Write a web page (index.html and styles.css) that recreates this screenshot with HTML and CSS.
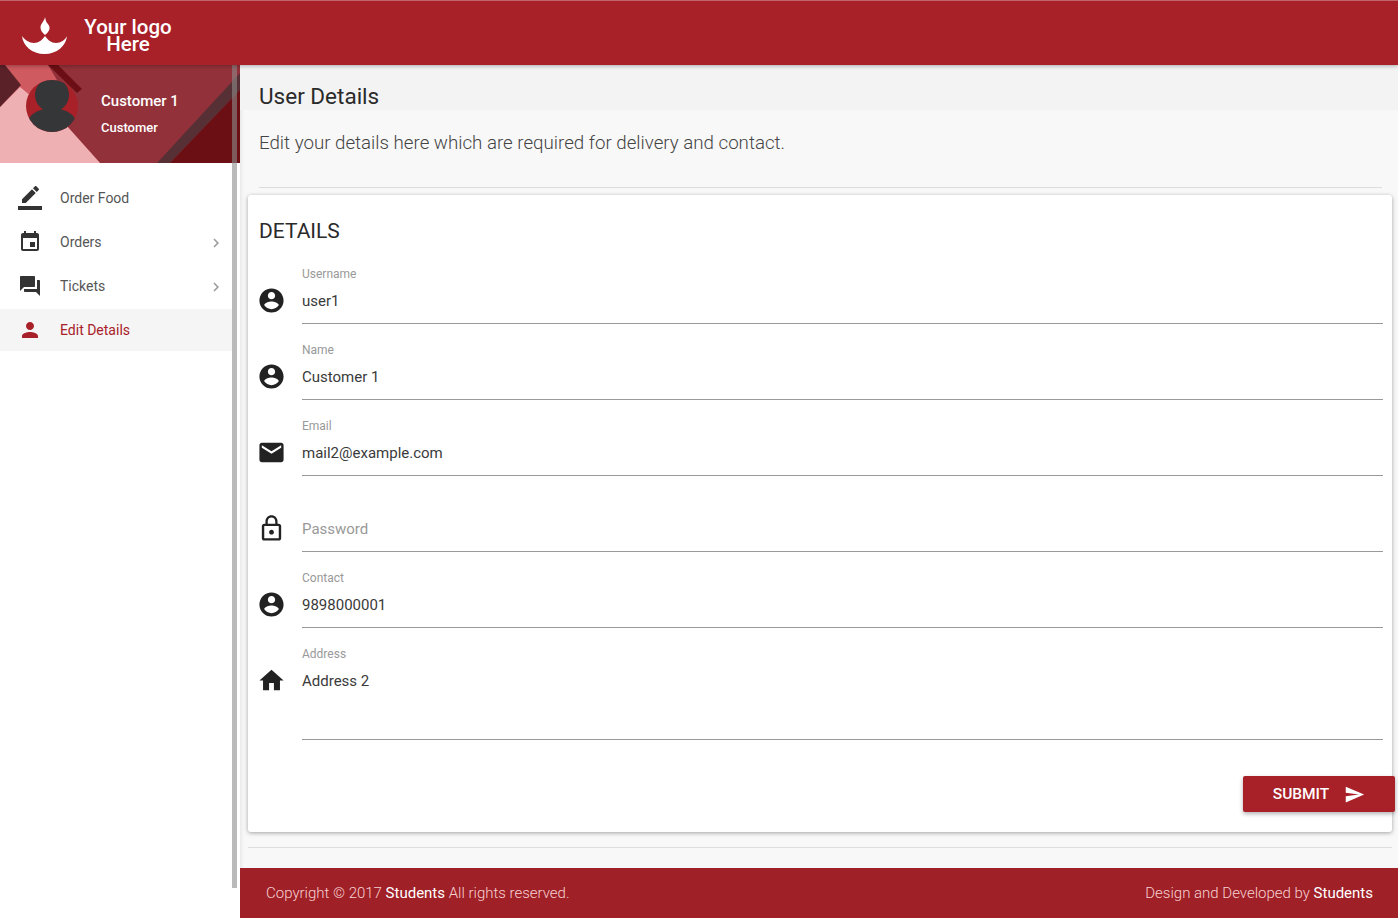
FILE: index.html
```html
<!DOCTYPE html>
<html lang="en">
<head>
    <meta charset="UTF-8">
    <meta name="viewport" content="width=device-width, initial-scale=1.0">
    <title>User Details</title>
    <link rel="stylesheet" href="styles.css">
</head>
<body>
    <header class="topbar">
        <svg class="logo-mark" viewBox="0 0 46 38">
            <path d="M23 1c-.5 4-4 6-4.500 10-.3 3 2 6 4.500 8 2.500-2 5-4.500 4.500-8-.5-3-3-3.500-3.500-6-.3-1.500-.8-2.500-1-4z"/>
            <path d="M0 20c3 4 7 7 12 7 5 0 8-3 11-7 3 4 6 7 11 7 5 0 9-3 11-7-1 10-10 18-22.500 18S1 30 0 20z"/>
        </svg>
        <div class="logo-text">Your logo<br>Here</div>
    </header>

    <div class="layout">
        <aside class="sidebar">
            <div class="profile">
                <svg class="profile-bg" viewBox="0 0 240 98">
                    <rect width="240" height="98" fill="#cf5a60"/>
                    <polygon points="48,0 240,0 240,98 100,98 66,60 72,40" fill="#93313a"/>
                    <polygon points="0,42 20,22 66,60 100,98 0,98" fill="#eeb0b3"/>
                    <polygon points="0,0 5,0 21,20 0,42" fill="#5a2228"/>
                    <polygon points="48,0 58,0 82,24 77,28" fill="#6b0f14"/>
                    <polygon points="157,98 240,8 240,25 170,98" fill="#573036"/>
                    <polygon points="170,98 240,25 240,98" fill="#6b0f14"/>
                </svg>
                <svg class="avatar" viewBox="0 0 52 52">
                    <clipPath id="avatar-clip"><circle cx="26" cy="26" r="26"/></clipPath>
                    <g clip-path="url(#avatar-clip)">
                        <rect width="52" height="52" fill="#a82028"/>
                        <circle cx="26" cy="15" r="17" fill="#343638"/>
                        <ellipse cx="26" cy="47" rx="26" ry="19" fill="#343638"/>
                    </g>
                </svg>
                <div class="profile-text">
                    <div class="profile-name">Customer 1</div>
                    <div class="profile-role">Customer</div>
                </div>
            </div>
            <nav class="menu">
                <a class="menu-item">
                    <svg class="menu-icon" viewBox="0 0 24 24"><path d="M17.750 7L14 3.250l-10 10V17h3.750l10-10zm2.960-2.960c.39-.39.39-1.020 0-1.410L18.370.29a.996.996 0 0 0-1.410 0L15 2.250 18.750 6l1.960-1.960z"/><path d="M0 20h24v4H0z"/></svg>
                    <span>Order Food</span>
                </a>
                <a class="menu-item">
                    <svg class="menu-icon" viewBox="0 0 24 24"><path d="M17 12h-5v5h5v-5zM16 1v2H8V1H6v2H5c-1.110 0-1.990.9-1.990 2L3 19c0 1.100.89 2 2 2h14c1.100 0 2-.9 2-2V5c0-1.100-.9-2-2-2h-1V1h-2zm3 18H5V8h14v11z"/></svg>
                    <span>Orders</span>
                    <svg class="chevron" viewBox="0 0 24 24"><path d="M10 6L8.590 7.410 13.170 12l-4.580 4.590L10 18l6-6z"/></svg>
                </a>
                <a class="menu-item">
                    <svg class="menu-icon" viewBox="0 0 24 24"><path d="M21 6h-2v9H6v2c0 .55.45 1 1 1h11l4 4V7c0-.55-.45-1-1-1zm-4 6V3c0-.55-.45-1-1-1H3c-.55 0-1 .45-1 1v14l4-4h10c.55 0 1-.45 1-1z"/></svg>
                    <span>Tickets</span>
                    <svg class="chevron" viewBox="0 0 24 24"><path d="M10 6L8.590 7.410 13.170 12l-4.580 4.590L10 18l6-6z"/></svg>
                </a>
                <a class="menu-item active">
                    <svg class="menu-icon" viewBox="0 0 24 24"><path d="M12 12c2.210 0 4-1.790 4-4s-1.790-4-4-4-4 1.790-4 4 1.790 4 4 4zm0 2c-2.670 0-8 1.340-8 4v2h16v-2c0-2.660-5.330-4-8-4z"/></svg>
                    <span>Edit Details</span>
                </a>
            </nav>
            <div class="scrollbar"></div>
        </aside>

        <main class="content">
            <h1 class="page-title">User Details</h1>
            <div class="page-sub">
                <p>Edit your details here which are required for delivery and contact.</p>
            </div>
            <div class="card-wrap">
                <section class="card">
                    <h2 class="card-title">DETAILS</h2>

                    <div class="field">
                        <svg class="field-icon" viewBox="0 0 24 24"><path d="M12 2C6.480 2 2 6.480 2 12s4.480 10 10 10 10-4.480 10-10S17.520 2 12 2zm0 3c1.660 0 3 1.340 3 3s-1.340 3-3 3-3-1.340-3-3 1.340-3 3-3zm0 14.200c-2.500 0-4.710-1.280-6-3.220.03-1.990 4-3.080 6-3.080 1.990 0 5.970 1.090 6 3.080-1.290 1.940-3.500 3.220-6 3.220z"/></svg>
                        <div class="field-body">
                            <div class="field-label">Username</div>
                            <div class="field-value">user1</div>
                        </div>
                    </div>
                    <div class="field">
                        <svg class="field-icon" viewBox="0 0 24 24"><path d="M12 2C6.480 2 2 6.480 2 12s4.480 10 10 10 10-4.480 10-10S17.520 2 12 2zm0 3c1.660 0 3 1.340 3 3s-1.340 3-3 3-3-1.340-3-3 1.340-3 3-3zm0 14.200c-2.500 0-4.710-1.280-6-3.220.03-1.990 4-3.080 6-3.080 1.990 0 5.970 1.090 6 3.080-1.290 1.940-3.500 3.220-6 3.220z"/></svg>
                        <div class="field-body">
                            <div class="field-label">Name</div>
                            <div class="field-value">Customer 1</div>
                        </div>
                    </div>
                    <div class="field">
                        <svg class="field-icon" viewBox="0 0 24 24"><path d="M20 4H4c-1.100 0-1.990.9-1.990 2L2 18c0 1.100.9 2 2 2h16c1.100 0 2-.9 2-2V6c0-1.100-.9-2-2-2zm0 4l-8 5-8-5V6l8 5 8-5v2z"/></svg>
                        <div class="field-body">
                            <div class="field-label">Email</div>
                            <div class="field-value">mail2@example.com</div>
                        </div>
                    </div>
                    <div class="field">
                        <svg class="field-icon" viewBox="0 0 24 24"><path d="M12 17c1.100 0 2-.9 2-2s-.9-2-2-2-2 .9-2 2 .9 2 2 2zm6-9h-1V6c0-2.760-2.240-5-5-5S7 3.240 7 6v2H6c-1.100 0-2 .9-2 2v10c0 1.100.9 2 2 2h12c1.100 0 2-.9 2-2V10c0-1.100-.9-2-2-2zM8.900 6c0-1.710 1.390-3.100 3.100-3.100s3.100 1.390 3.100 3.100v2H8.900V6zM18 20H6V10h12v10z"/></svg>
                        <div class="field-body">
                            <div class="field-label"></div>
                            <div class="field-value placeholder">Password</div>
                        </div>
                    </div>
                    <div class="field">
                        <svg class="field-icon" viewBox="0 0 24 24"><path d="M12 2C6.480 2 2 6.480 2 12s4.480 10 10 10 10-4.480 10-10S17.520 2 12 2zm0 3c1.660 0 3 1.340 3 3s-1.340 3-3 3-3-1.340-3-3 1.340-3 3-3zm0 14.200c-2.500 0-4.710-1.280-6-3.220.03-1.990 4-3.080 6-3.080 1.990 0 5.970 1.090 6 3.080-1.290 1.940-3.500 3.220-6 3.220z"/></svg>
                        <div class="field-body">
                            <div class="field-label">Contact</div>
                            <div class="field-value">9898000001</div>
                        </div>
                    </div>
                    <div class="field field-tall">
                        <svg class="field-icon" viewBox="0 0 24 24"><path d="M10 20v-6h4v6h5v-8h3L12 3 2 12h3v8z"/></svg>
                        <div class="field-body">
                            <div class="field-label">Address</div>
                            <div class="field-value">Address 2</div>
                        </div>
                    </div>

                    <div class="card-actions">
                        <button class="submit-btn">
                            SUBMIT
                            <svg viewBox="0 0 24 24"><path d="M2.010 21L23 12 2.010 3 2 10l15 2-15 2z"/></svg>
                        </button>
                    </div>
                </section>
                <hr class="bottom-rule">
            </div>
            <footer class="footer">
                <div>Copyright © 2017 <span class="footer-em">Students</span> All rights reserved.</div>
                <div>Design and Developed by <span class="footer-em">Students</span></div>
            </footer>
        </main>
    </div>
</body>
</html>
```

FILE: styles.css
```css
* {
    box-sizing: border-box;
}
html, body {
    height: 100%;
}
body {
    margin: 0;
    overflow: hidden;
    font-family: Roboto, "Liberation Sans", sans-serif;
    color: #222;
    background-color: #f8f8f8;
}

/* top bar */
.topbar {
    height: 65px;
    display: flex;
    align-items: flex-start;
    padding-left: 22px;
    background-color: #a82028;
    border-top: 1px solid #c0666b;
    box-shadow: 0 1px 4px rgba(0, 0, 0, 0.3);
    position: relative;
    z-index: 2;
}
.logo-mark {
    width: 46px;
    height: 38px;
    margin-top: 15px;
    fill: #fff;
}
.logo-text {
    width: 120px;
    padding-top: 18px;
    color: #fff;
    font-size: 20.5px;
    font-weight: 500;
    line-height: 17px;
    text-align: center;
}

.layout {
    display: flex;
    height: 853px;
}

/* sidebar */
.sidebar {
    width: 240px;
    flex-shrink: 0;
    background-color: #fff;
    position: relative;
}
.profile {
    height: 98px;
    display: flex;
    align-items: flex-start;
    position: relative;
    color: #fff;
}
.profile-bg {
    position: absolute;
    left: 0;
    top: 0;
    width: 240px;
    height: 98px;
}
.avatar {
    width: 52px;
    height: 52px;
    margin: 15px 0 0 26px;
    position: relative;
}
.profile-text {
    margin: 26px 0 0 23px;
    position: relative;
}
.profile-name {
    font-size: 15px;
    font-weight: 500;
    line-height: 20px;
}
.profile-role {
    margin-top: 7px;
    font-size: 13px;
    font-weight: 500;
    line-height: 20px;
}
.menu {
    display: flex;
    flex-direction: column;
    gap: 2px;
    width: 232px;
    padding-top: 14px;
}
.menu-item {
    height: 42px;
    display: flex;
    align-items: center;
    padding: 0 7px 0 18px;
    color: #555;
    font-size: 14px;
}
.menu-item span {
    flex: 1;
    margin-left: 18px;
}
.menu-item.active {
    background-color: #f5f5f5;
    color: #a82028;
}
.menu-icon {
    width: 24px;
    height: 24px;
    fill: #333;
}
.active .menu-icon {
    fill: #a82028;
}
.chevron {
    width: 18px;
    height: 18px;
    fill: #999;
    margin-top: 2px;
}
.scrollbar {
    position: absolute;
    left: 232px;
    top: 0;
    width: 5px;
    height: 823px;
    background-color: rgba(140, 140, 140, 0.6);
}

/* main */
.content {
    flex: 1;
    min-width: 0;
    display: flex;
    flex-direction: column;
    box-shadow: inset 2px 0 3px rgba(0, 0, 0, 0.06);
}
.page-title {
    height: 45px;
    margin: 0;
    padding: 17px 0 0 19px;
    background-color: #f3f3f3;
    color: #2a2a2a;
    font-size: 22.5px;
    font-weight: 400;
    line-height: 28px;
}
.page-sub {
    height: 78px;
    margin: 0 16px 0 19px;
    border-bottom: 1px solid #ddd;
}
.page-sub p {
    margin: 0;
    padding-top: 21px;
    color: #444;
    font-size: 18.72px;
    font-weight: 300;
    line-height: 24px;
}
.card-wrap {
    padding: 7px 6px 0 8px;
}
.card {
    height: 637px;
    padding: 0 9px 0 11px;
    background-color: #fff;
    border-radius: 3px;
    box-shadow: 0 1px 4px rgba(0, 0, 0, 0.35);
}
.card-title {
    margin: 0;
    padding-top: 23px;
    height: 53px;
    color: #2a2a2a;
    font-size: 21px;
    font-weight: 400;
    line-height: 26px;
}
.field {
    display: flex;
    align-items: flex-start;
}
.field-icon {
    width: 29px;
    height: 29px;
    margin: 38px 0 0 -2px;
    flex-shrink: 0;
    fill: #222;
}
.field-body {
    flex: 1;
    height: 76px;
    margin-left: 16px;
    padding-top: 18px;
    border-bottom: 1px solid #999;
}
.field-tall .field-body {
    height: 112px;
}
.field-label {
    height: 16px;
    color: #999;
    font-size: 12px;
    line-height: 16px;
}
.field-value {
    margin-top: 8px;
    color: #3a3a3a;
    font-size: 15px;
    line-height: 22px;
}
.field-value.placeholder {
    color: #999;
}
.card-actions {
    display: flex;
    justify-content: flex-end;
    margin-right: -12px;
    padding-top: 36px;
}
.submit-btn {
    width: 152px;
    height: 36px;
    display: flex;
    align-items: center;
    justify-content: center;
    gap: 15px;
    padding: 0;
    border: none;
    border-radius: 2px;
    background-color: #a82028;
    color: #fff;
    font-family: inherit;
    font-size: 15.5px;
    font-weight: 500;
    box-shadow: 0 2px 4px rgba(0, 0, 0, 0.3);
    cursor: pointer;
}
.submit-btn svg {
    width: 21px;
    height: 21px;
    fill: #fff;
}
.bottom-rule {
    height: 1px;
    margin: 15px 0 0;
    border: none;
    background-color: #ddd;
}
.footer {
    margin-top: auto;
    height: 50px;
    display: flex;
    align-items: center;
    justify-content: space-between;
    padding: 0 25px 0 26px;
    background-color: #9f2027;
    color: #f8d0d2;
    font-size: 15px;
    font-weight: 300;
}
.footer-em {
    color: #fff;
    font-weight: 400;
}
```
